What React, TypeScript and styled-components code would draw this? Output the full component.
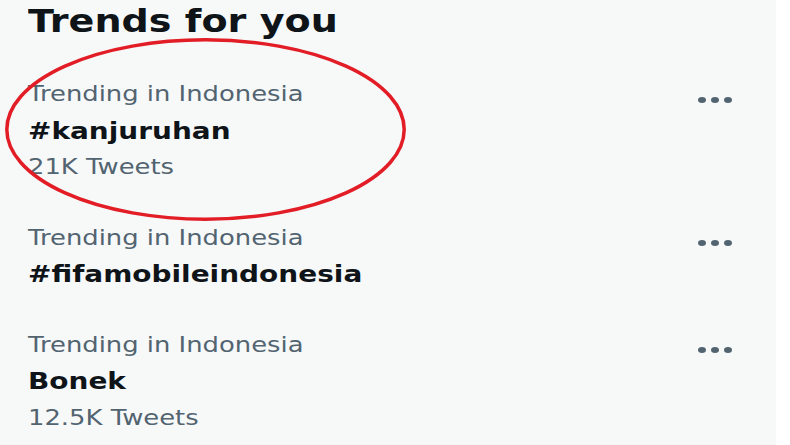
import React, {FC} from "react";
import styled, {createGlobalStyle} from "styled-components";

const GlobalStyle = createGlobalStyle`
  html, body {
    margin: 0;
    padding: 0;
    background: #ffffff;
  }
`

const colors = {
  panel: "#f7f9f9",
  text: "#0f1419",
  muted: "#536471",
  mark: "#e21d26",
}

const Panel = styled.section`
  position: relative;
  width: 776px;
  height: 445px;
  overflow: hidden;
  background: ${colors.panel};
  font-family: "DejaVu Sans", "Liberation Sans", sans-serif;
`

const Header = styled.div`
  box-sizing: border-box;
  height: 59.4px;
  padding: 1px 0 0 28px;
`

const Title = styled.h2`
  margin: 0;
  font-size: 32.3px;
  line-height: 40px;
  font-weight: 700;
  color: ${colors.text};
  white-space: nowrap;
  transform: scaleX(1.18);
  transform-origin: left center;
`

const Row = styled.div`
  display: flex;
  justify-content: space-between;
  align-items: flex-start;
  padding: 17px 44px 17px 28px;
`

const TextColumn = styled.div`
  display: flex;
  flex-direction: column;
  transform: scaleX(1.18);
  transform-origin: left center;
`

const Line = styled.span<{ $strong?: boolean }>`
  height: 36.5px;
  line-height: 36.5px;
  white-space: nowrap;
  font-size: ${p => p.$strong ? 23.7 : 21.9}px;
  font-weight: ${p => p.$strong ? 700 : 400};
  color: ${p => p.$strong ? colors.text : colors.muted};
`

const MoreButton = styled.button`
  display: flex;
  margin-top: 19.6px;
  padding: 0;
  border: 0;
  background: transparent;
  color: ${colors.muted};
  cursor: pointer;
`

const Mark = styled.svg`
  position: absolute;
  left: 0;
  top: 0;
  pointer-events: none;
`

const MoreIcon: FC = () => (
  <svg width="34" height="8" viewBox="0 0 34 8">
    <ellipse cx="4" cy="4" rx="4" ry="3" fill="currentColor"/>
    <ellipse cx="17" cy="4" rx="4" ry="3" fill="currentColor"/>
    <ellipse cx="30" cy="4" rx="4" ry="3" fill="currentColor"/>
  </svg>
)

interface Trend {
  context: string
  name: string
  count?: string
}

const trends: Trend[] = [
  {context: "Trending in Indonesia", name: "#kanjuruhan", count: "21K Tweets"},
  {context: "Trending in Indonesia", name: "#fifamobileindonesia"},
  {context: "Trending in Indonesia", name: "Bonek", count: "12.5K Tweets"},
]

const TrendRow: FC<{ trend: Trend }> = ({trend}) => (
  <Row>
    <TextColumn>
      <Line>{trend.context}</Line>
      <Line $strong>{trend.name}</Line>
      {trend.count && <Line>{trend.count}</Line>}
    </TextColumn>
    <MoreButton aria-label="More">
      <MoreIcon/>
    </MoreButton>
  </Row>
)

const App: FC = () => (
  <>
    <GlobalStyle/>
    <Panel>
      <Header>
        <Title>Trends for you</Title>
      </Header>
      {trends.map(t => <TrendRow key={t.name} trend={t}/>)}
      <Mark width="776" height="445">
        <ellipse cx="205.5" cy="129.5" rx="198.7" ry="89.7" fill="none" stroke={colors.mark} strokeWidth="3.5"/>
      </Mark>
    </Panel>
  </>
)

export default App;
